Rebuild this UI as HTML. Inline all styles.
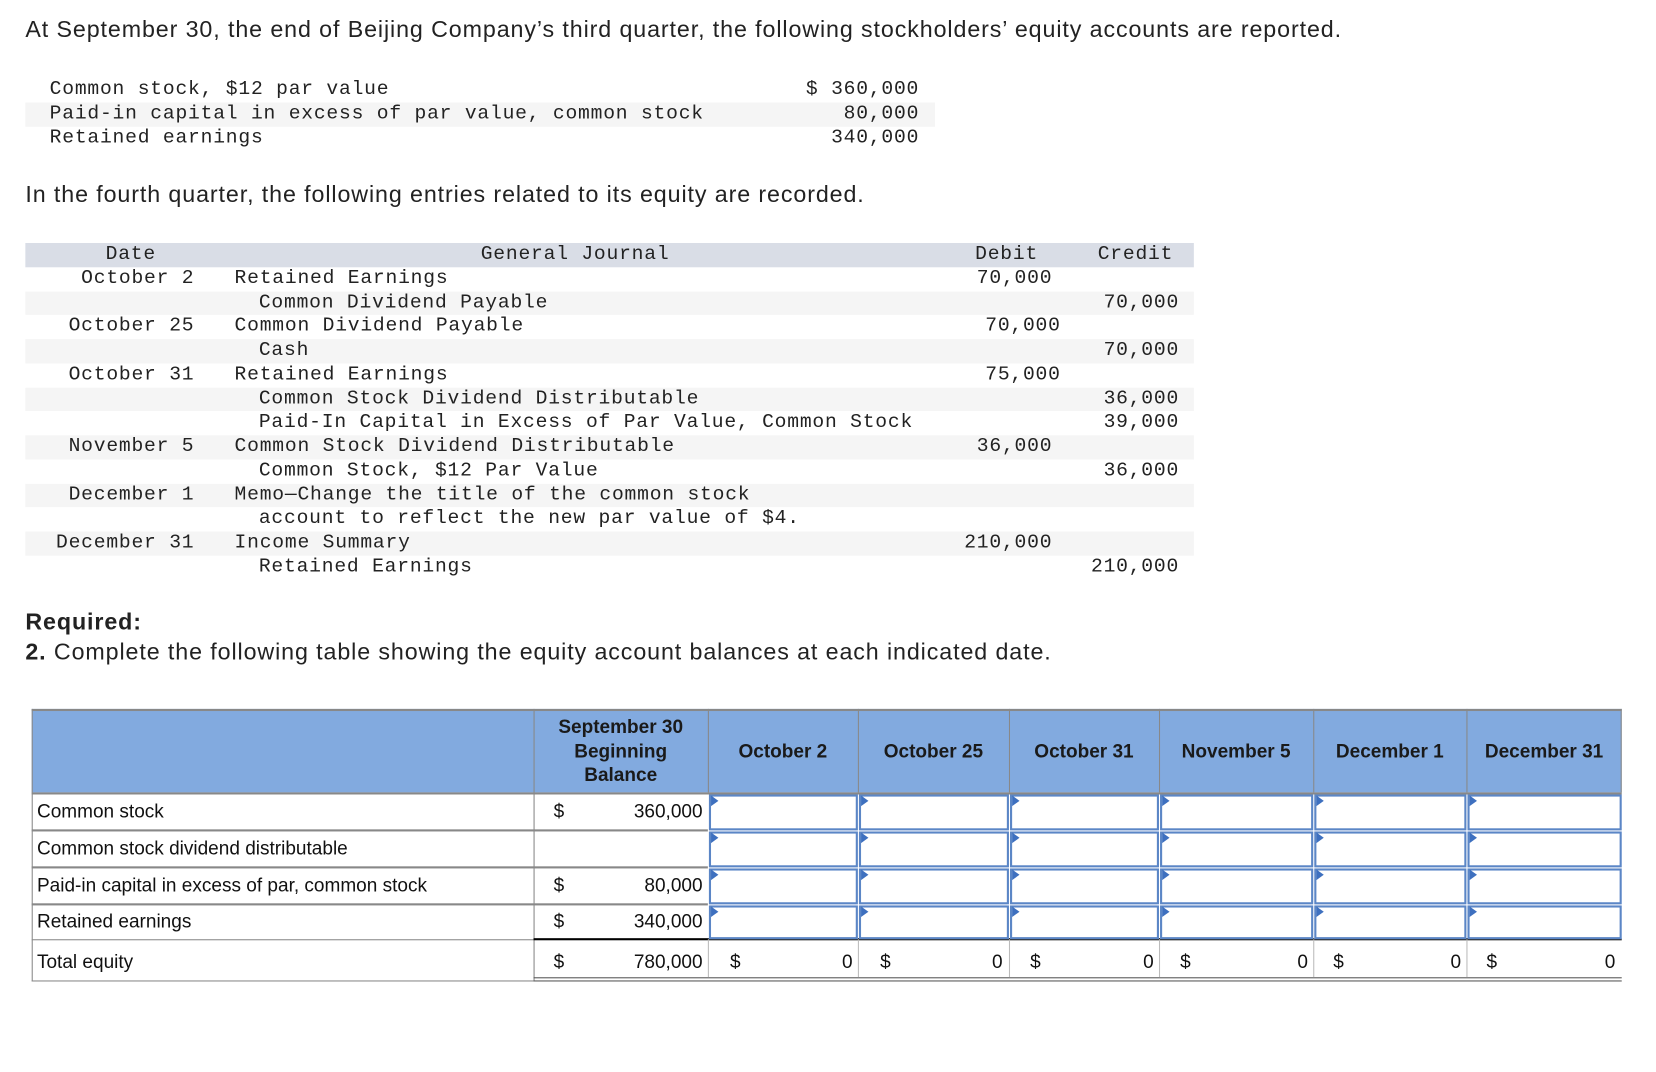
<!DOCTYPE html>
<html><head><meta charset="utf-8"><style>
html,body{margin:0;padding:0;background:#fff;overflow:hidden;width:1656px;height:1072px}
#w{position:absolute;left:0;top:0;width:1560px;height:1010px;transform:scale(1.0565);transform-origin:0 0;color:#222}
.s{position:absolute;font-family:"Liberation Sans",sans-serif;white-space:nowrap;letter-spacing:0.85px}
.m{position:absolute;font-family:"Liberation Mono",monospace;font-size:18.6px;letter-spacing:0.75px;white-space:nowrap;line-height:22.75px;color:#222}
.r{text-align:right}
.bar{position:absolute;left:24px;width:1106px;height:22.75px;background:#f5f5f5}
.t{position:absolute;font-family:"Liberation Sans",sans-serif;font-size:18px;white-space:nowrap;color:#111;line-height:20px}
.h{font-weight:bold;text-align:center;color:#1a1a1a}
.ln{position:absolute;background:#888}
.in{position:absolute;box-sizing:border-box;border:2px solid #5b86c6;background:#fff}
.in:before{content:"";position:absolute;left:0;top:0;border-left:7px solid #3e70bf;border-top:5px solid transparent;border-bottom:5px solid transparent;top:-1px}
</style></head><body><div id="w">
<div class="s" style="left:24px;top:14px;font-size:22px;line-height:28px">At September 30, the end of Beijing Company’s third quarter, the following stockholders’ equity accounts are reported.</div>
<div style="position:absolute;left:24px;top:97px;width:861px;height:22.75px;background:#f5f5f5"></div>
<div class="m" style="left:47px;top:74px">Common stock, $12 par value</div>
<div class="m" style="left:47px;top:97px">Paid-in capital in excess of par value, common stock</div>
<div class="m" style="left:47px;top:120px">Retained earnings</div>
<div class="m r" style="right:690px;top:74px">$ 360,000</div>
<div class="m r" style="right:690px;top:97px">80,000</div>
<div class="m r" style="right:690px;top:120px">340,000</div>
<div class="s" style="left:24px;top:170px;font-size:22px;line-height:28px">In the fourth quarter, the following entries related to its equity are recorded.</div>

<div class="bar" style="top:230px;background:#d9dde6"></div>
<div class="bar" style="top:275.5px"></div>
<div class="bar" style="top:321px"></div>
<div class="bar" style="top:366.5px"></div>
<div class="bar" style="top:412px"></div>
<div class="bar" style="top:457.5px"></div>
<div class="bar" style="top:503px"></div>
<div class="m" style="left:100px;top:230px">Date</div>
<div class="m" style="left:455px;top:230px">General Journal</div>
<div class="m" style="left:923px;top:230px">Debit</div>
<div class="m" style="left:1039px;top:230px">Credit</div>

<div class="m r" style="right:1376px;top:252.75px">October 2</div>
<div class="m r" style="right:1376px;top:298.25px">October 25</div>
<div class="m r" style="right:1376px;top:343.75px">October 31</div>
<div class="m r" style="right:1376px;top:412px">November 5</div>
<div class="m r" style="right:1376px;top:457.5px">December 1</div>
<div class="m r" style="right:1376px;top:503px">December 31</div>

<div class="m" style="left:222px;top:252.75px">Retained Earnings</div>
<div class="m" style="left:245px;top:275.5px">Common Dividend Payable</div>
<div class="m" style="left:222px;top:298.25px">Common Dividend Payable</div>
<div class="m" style="left:245px;top:321px">Cash</div>
<div class="m" style="left:222px;top:343.75px">Retained Earnings</div>
<div class="m" style="left:245px;top:366.5px">Common Stock Dividend Distributable</div>
<div class="m" style="left:245px;top:389.25px">Paid-In Capital in Excess of Par Value, Common Stock</div>
<div class="m" style="left:222px;top:412px">Common Stock Dividend Distributable</div>
<div class="m" style="left:245px;top:434.75px">Common Stock, $12 Par Value</div>
<div class="m" style="left:222px;top:457.5px">Memo—Change the title of the common stock</div>
<div class="m" style="left:245px;top:480.25px">account to reflect the new par value of $4.</div>
<div class="m" style="left:222px;top:503px">Income Summary</div>
<div class="m" style="left:245px;top:525.75px">Retained Earnings</div>

<div class="m r" style="right:564px;top:252.75px">70,000</div>
<div class="m r" style="right:556px;top:298.25px">70,000</div>
<div class="m r" style="right:556px;top:343.75px">75,000</div>
<div class="m r" style="right:564px;top:412px">36,000</div>
<div class="m r" style="right:564px;top:503px">210,000</div>
<div class="m r" style="right:444px;top:275.5px">70,000</div>
<div class="m r" style="right:444px;top:321px">70,000</div>
<div class="m r" style="right:444px;top:366.5px">36,000</div>
<div class="m r" style="right:444px;top:389.25px">39,000</div>
<div class="m r" style="right:444px;top:434.75px">36,000</div>
<div class="m r" style="right:444px;top:525.75px">210,000</div>

<div class="s" style="left:24px;top:576px;font-size:22px;line-height:26px;font-weight:bold">Required:</div>
<div class="s" style="left:24px;top:603px;font-size:22px;line-height:28px"><b>2.</b> Complete the following table showing the equity account balances at each indicated date.</div>

<div style="position:absolute;left:30px;top:671px;width:1505px;height:79px;background:#82aadf;border-top:2px solid #888;box-sizing:border-box"></div>
<div class="ln" style="left:30px;top:671px;width:1px;height:258px"></div>
<div class="ln" style="left:505px;top:671px;width:1px;height:258px"></div>
<div class="ln" style="left:670px;top:671px;width:1px;height:79px"></div>
<div class="ln" style="left:812px;top:671px;width:1px;height:79px"></div>
<div class="ln" style="left:955px;top:671px;width:1px;height:79px"></div>
<div class="ln" style="left:1097px;top:671px;width:1px;height:79px"></div>
<div class="ln" style="left:1243px;top:671px;width:1px;height:79px"></div>
<div class="ln" style="left:1388px;top:671px;width:1px;height:79px"></div>
<div class="ln" style="left:1534px;top:671px;width:1px;height:79px"></div>
<div class="ln" style="left:30px;top:750px;width:1505px;height:2px"></div>
<div class="ln" style="left:30px;top:785px;width:640px;height:2px"></div>
<div class="ln" style="left:30px;top:820px;width:640px;height:2px"></div>
<div class="ln" style="left:30px;top:855px;width:640px;height:2px"></div>
<div class="ln" style="left:30px;top:889px;width:475px;height:1px"></div>
<div style="position:absolute;left:505px;top:888px;width:1030px;height:2px;background:#000"></div>
<div class="ln" style="left:30px;top:928px;width:475px;height:1px"></div>
<div style="position:absolute;left:505px;top:925px;width:1030px;height:1px;background:#555"></div>
<div style="position:absolute;left:505px;top:928px;width:1030px;height:1px;background:#555"></div>
<div class="ln" style="left:670px;top:889px;width:1px;height:36px;background:#bbb"></div>
<div class="ln" style="left:812px;top:889px;width:1px;height:36px;background:#bbb"></div>
<div class="ln" style="left:955px;top:889px;width:1px;height:36px;background:#bbb"></div>
<div class="ln" style="left:1097px;top:889px;width:1px;height:36px;background:#bbb"></div>
<div class="ln" style="left:1243px;top:889px;width:1px;height:36px;background:#bbb"></div>
<div class="ln" style="left:1388px;top:889px;width:1px;height:36px;background:#bbb"></div>

<div class="t h" style="left:505px;width:165px;top:677px;line-height:22.5px">September 30<br>Beginning<br>Balance</div>
<div class="t h" style="left:670px;width:142px;top:701px">October 2</div>
<div class="t h" style="left:812px;width:143px;top:701px">October 25</div>
<div class="t h" style="left:955px;width:142px;top:701px">October 31</div>
<div class="t h" style="left:1097px;width:146px;top:701px">November 5</div>
<div class="t h" style="left:1243px;width:145px;top:701px">December 1</div>
<div class="t h" style="left:1388px;width:147px;top:701px">December 31</div>

<div class="t" style="left:35px;top:758px">Common stock</div>
<div class="t" style="left:35px;top:793px">Common stock dividend distributable</div>
<div class="t" style="left:35px;top:828px">Paid-in capital in excess of par, common stock</div>
<div class="t" style="left:35px;top:862px">Retained earnings</div>
<div class="t" style="left:35px;top:900px">Total equity</div>
<div class="t" style="left:524px;top:758px">$</div>
<div class="t" style="left:524px;top:828px">$</div>
<div class="t" style="left:524px;top:862px">$</div>
<div class="t" style="left:524px;top:900px">$</div>
<div class="t r" style="right:895px;top:758px">360,000</div>
<div class="t r" style="right:895px;top:828px">80,000</div>
<div class="t r" style="right:895px;top:862px">340,000</div>
<div class="t r" style="right:895px;top:900px">780,000</div>
<div class="t" style="left:691px;top:900px">$</div><div class="t r" style="right:753px;top:900px">0</div>
<div class="t" style="left:833px;top:900px">$</div><div class="t r" style="right:611px;top:900px">0</div>
<div class="t" style="left:975px;top:900px">$</div><div class="t r" style="right:468px;top:900px">0</div>
<div class="t" style="left:1117px;top:900px">$</div><div class="t r" style="right:322px;top:900px">0</div>
<div class="t" style="left:1262px;top:900px">$</div><div class="t r" style="right:177px;top:900px">0</div>
<div class="t" style="left:1407px;top:900px">$</div><div class="t r" style="right:31px;top:900px">0</div>

<div class="in" style="left:671px;top:752px;width:141px;height:34px"></div><div class="in" style="left:813px;top:752px;width:142px;height:34px"></div><div class="in" style="left:956px;top:752px;width:141px;height:34px"></div><div class="in" style="left:1098px;top:752px;width:145px;height:34px"></div><div class="in" style="left:1244px;top:752px;width:144px;height:34px"></div><div class="in" style="left:1389px;top:752px;width:146px;height:34px"></div>
<div class="in" style="left:671px;top:787px;width:141px;height:34px"></div><div class="in" style="left:813px;top:787px;width:142px;height:34px"></div><div class="in" style="left:956px;top:787px;width:141px;height:34px"></div><div class="in" style="left:1098px;top:787px;width:145px;height:34px"></div><div class="in" style="left:1244px;top:787px;width:144px;height:34px"></div><div class="in" style="left:1389px;top:787px;width:146px;height:34px"></div>
<div class="in" style="left:671px;top:822px;width:141px;height:34px"></div><div class="in" style="left:813px;top:822px;width:142px;height:34px"></div><div class="in" style="left:956px;top:822px;width:141px;height:34px"></div><div class="in" style="left:1098px;top:822px;width:145px;height:34px"></div><div class="in" style="left:1244px;top:822px;width:144px;height:34px"></div><div class="in" style="left:1389px;top:822px;width:146px;height:34px"></div>
<div class="in" style="left:671px;top:857px;width:141px;height:32px"></div><div class="in" style="left:813px;top:857px;width:142px;height:32px"></div><div class="in" style="left:956px;top:857px;width:141px;height:32px"></div><div class="in" style="left:1098px;top:857px;width:145px;height:32px"></div><div class="in" style="left:1244px;top:857px;width:144px;height:32px"></div><div class="in" style="left:1389px;top:857px;width:146px;height:32px"></div>
</div></body></html>
